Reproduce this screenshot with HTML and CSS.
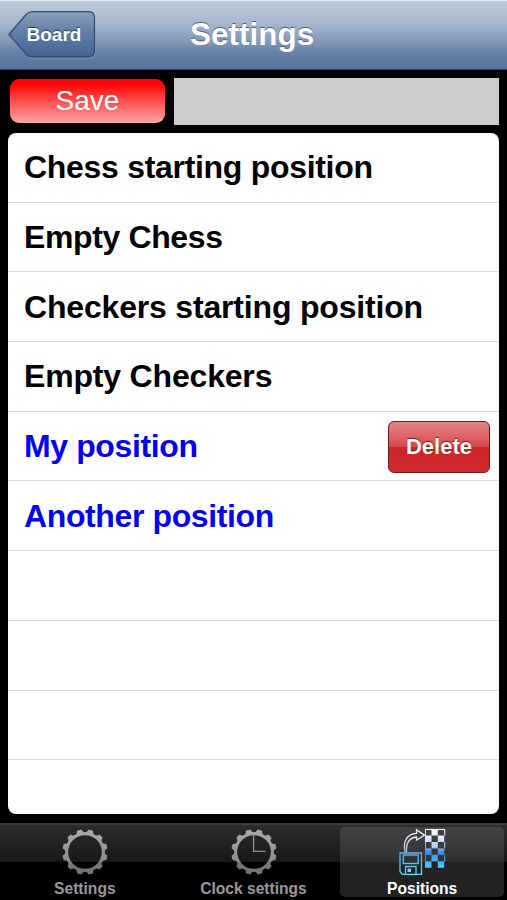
FILE: index.html
```html
<!DOCTYPE html>
<html lang="en">
<head>
    <meta charset="UTF-8">
    <meta name="viewport" content="width=device-width, initial-scale=1.0">
    <title>Settings</title>
    <link rel="stylesheet" href="styles.css">
</head>
<body>
    <header class="navbar">
        <button class="back-btn">
            <svg class="back-shape" width="90" height="50" viewBox="0 0 90 50">
                <defs>
                    <linearGradient id="back-fill" x1="0" y1="0" x2="0" y2="1">
                        <stop offset="0" stop-color="#8c9db9"/>
                        <stop offset="0.5" stop-color="#5f7ca5"/>
                        <stop offset="1" stop-color="#426393"/>
                    </linearGradient>
                </defs>
                <path d="M20 2.600 Q22 1.600 25 1.600 H80.500 Q87 1.600 87 8 V40.500 Q87 47 80.500 47 H25 Q22 47 20 45 L1.200 24.500 Z" fill="none" stroke="#a5b9d3" stroke-opacity=".6"/>
                <path d="M18.500 3 Q21 .6 24.500 .6 H80.500 Q86.500 .6 86.500 7 V39.500 Q86.500 45.900 80.500 45.900 H24.500 Q21 45.900 18.500 43.500 L.8 23.500 Z" fill="url(#back-fill)" stroke="#34496b" stroke-width="1.200"/>
            </svg>
            <span class="back-label">Board</span>
        </button>
        <h1>Settings</h1>
    </header>

    <main>
        <div class="save-row">
            <button class="save-btn">Save</button>
            <div class="name-box"></div>
        </div>
        <ul class="positions">
            <li>Chess starting position</li>
            <li class="tight">Empty Chess</li>
            <li class="wide">Checkers starting position</li>
            <li class="wide">Empty Checkers</li>
            <li class="mine tight"><span>My position</span><button class="delete-btn">Delete</button></li>
            <li class="mine tight">Another position</li>
            <li></li>
            <li></li>
            <li></li>
            <li></li>
        </ul>
    </main>

    <nav class="tabbar">
        <a class="tab">
            <svg width="48" height="48" viewBox="-24 -24 48 48">
                <defs>
                    <linearGradient id="metal" x1="0" y1="0" x2="0" y2="1">
                        <stop offset="0" stop-color="#aaa"/>
                        <stop offset="0.68" stop-color="#8c8c8c"/>
                        <stop offset="0.72" stop-color="#777"/>
                        <stop offset="1" stop-color="#727272"/>
                    </linearGradient>
                    <path id="tooth" d="M-5.200 -18.500 Q-3 -19.800 -2.700 -21.500 Q-2.500 -22.700 -1.700 -22.700 H1.700 Q2.500 -22.700 2.700 -21.500 Q3 -19.800 5.200 -18.500 Z"/>
                    <mask id="gear" maskUnits="userSpaceOnUse" x="-24" y="-24" width="48" height="48">
                        <g fill="#fff">
                            <circle r="18.300" fill="none" stroke="#fff" stroke-width="3"/>
                            <use href="#tooth" transform="rotate(15)"/>
                            <use href="#tooth" transform="rotate(45)"/>
                            <use href="#tooth" transform="rotate(75)"/>
                            <use href="#tooth" transform="rotate(105)"/>
                            <use href="#tooth" transform="rotate(135)"/>
                            <use href="#tooth" transform="rotate(165)"/>
                            <use href="#tooth" transform="rotate(195)"/>
                            <use href="#tooth" transform="rotate(225)"/>
                            <use href="#tooth" transform="rotate(255)"/>
                            <use href="#tooth" transform="rotate(285)"/>
                            <use href="#tooth" transform="rotate(315)"/>
                            <use href="#tooth" transform="rotate(345)"/>
                        </g>
                    </mask>
                </defs>
                <rect x="-24" y="-24" width="48" height="48" fill="url(#metal)" mask="url(#gear)"/>
            </svg>
            <span>Settings</span>
        </a>
        <a class="tab">
            <svg width="48" height="48" viewBox="-24 -24 48 48">
                <rect x="-24" y="-24" width="48" height="48" fill="url(#metal)" mask="url(#gear)"/>
                <path d="M-.4 -17.500 V-.6 H11.500" fill="none" stroke="#929292" stroke-width="1.300"/>
            </svg>
            <span>Clock settings</span>
        </a>
        <a class="tab active">
            <svg width="48" height="48" viewBox="-1 0 48 48">
                <defs>
                    <linearGradient id="board-fill" gradientUnits="userSpaceOnUse" x1="0" y1="1" x2="0" y2="40">
                        <stop offset="0" stop-color="#fff"/>
                        <stop offset="0.45" stop-color="#bccff5"/>
                        <stop offset="0.58" stop-color="#388cf0"/>
                        <stop offset="1" stop-color="#50c8ff"/>
                    </linearGradient>
                    <linearGradient id="disk-line" gradientUnits="userSpaceOnUse" x1="0" y1="2" x2="0" y2="46">
                        <stop offset="0" stop-color="#fff"/>
                        <stop offset="0.4" stop-color="#bcd0f0"/>
                        <stop offset="0.55" stop-color="#5fa8e0"/>
                        <stop offset="1" stop-color="#5ed8ff"/>
                    </linearGradient>
                </defs>
                <g fill="none" stroke="url(#disk-line)" stroke-width="1.300">
                    <path d="M1 25 H22.500 V46.300 H3.500 L1 43.800 Z"/>
                    <path d="M4.300 27 V35.500 H19.200 V27 Z"/>
                    <path d="M6.500 46 V38.500 H17 V46"/>
                    <path d="M6.200 24.500 C3.500 13 8 6 17.500 5.300 V1.800 L25.500 7.300 L17.500 12 V9 C10 9.500 7 15 7.500 24.500"/>
                </g>
                <path d="M8.500 40.500 H12 V44 H8.500 Z" fill="#5ed8ff"/>
                <path d="M26 1 H32.500 V2 H26 Z M32.500 1 H38.800 V7.500 H32.500 Z M38.800 1 H46.200 V7.500 H45.200 V2 H38.800 Z
                         M26 7.500 H32.500 V13.900 H26 Z M38.800 7.500 H45.200 V13.900 H38.800 Z
                         M32.500 13.900 H38.800 V20.400 H32.500 Z M45.200 13.900 H46.200 V20.400 H45.200 Z
                         M26 20.400 H32.500 V26.800 H26 Z M38.800 20.400 H45.200 V26.800 H38.800 Z
                         M32.500 26.800 H38.800 V33.200 H32.500 Z M45.200 26.800 H46.200 V33.200 H45.200 Z
                         M26 33.200 H32.500 V39.700 H26 Z M38.800 33.200 H45.200 V39.700 H38.800 Z
                         M26 2 H26.800 V7.500 H26 Z M26 13.900 H26.800 V20.400 H26 Z M26 26.800 H26.800 V33.200 H26 Z" fill="url(#board-fill)"/>
            </svg>
            <span>Positions</span>
        </a>
    </nav>
</body>
</html>
```
FILE: styles.css
```css
*{
    margin: 0;
    padding: 0;
    box-sizing: border-box;
}
body{
    height: 900px;
    display: flex;
    flex-direction: column;
    overflow: hidden;
    background-color: #000;
    font-family: "Liberation Sans", Arial, sans-serif;
}
button{
    border: none;
    font-family: inherit;
    cursor: pointer;
}
.navbar{
    height: 70px;
    display: flex;
    align-items: flex-start;
    padding: 10px 0 0 8px;
    border-top: 1px solid #e0eaf5;
    border-bottom: 1px solid #2c4470;
    background: linear-gradient(#bccada, #a9b9d0 30%, #8095b4 62%, #6682a8 75%, #587399);
}
.back-btn{
    position: relative;
    width: 88px;
    height: 47px;
    background: none;
}
.back-shape{
    position: absolute;
    left: 0;
    top: 0;
}
.back-label{
    position: relative;
    display: block;
    padding-left: 4px;
    color: #fff;
    font-size: 19px;
    font-weight: bold;
    line-height: 45px;
    text-shadow: 0 -1px 1px #2c4060;
}
h1{
    margin-left: 94px;
    color: #fff;
    font-size: 31.500px;
    line-height: 47px;
    text-shadow: 0 -1.500px 0 #4d5d75;
}
main{
    height: 753px;
    padding: 8px 8px 0;
}
.save-row{
    display: flex;
    gap: 9px;
    height: 47px;
}
.save-btn{
    width: 155px;
    height: 44px;
    margin: 1px 0 0 2px;
    border-radius: 9px;
    background: linear-gradient(#ff0505 12%, #ff4b4b 48%, #ffa4a4);
    color: #fff;
    font-size: 28px;
}
.name-box{
    flex: 1;
    background-color: #ccc;
}
.positions{
    height: 681px;
    margin-top: 8px;
    overflow: hidden;
    border-radius: 8px;
    background-color: #fff;
    list-style: none;
}
.positions li{
    height: 69.700px;
    display: flex;
    justify-content: space-between;
    align-items: center;
    padding: 1px 9px 0 16px;
    border-bottom: 1px solid #dcdcdc;
    font-size: 32px;
    font-weight: bold;
    letter-spacing: -0.300px;
}
.positions li:last-child{
    border-bottom: none;
}
.positions .tight{
    letter-spacing: -0.380px;
}
.positions .wide{
    letter-spacing: -0.180px;
}
.positions .mine{
    color: #0202ee;
}
.delete-btn{
    width: 102px;
    height: 52px;
    padding-top: 1px;
    border: 1px solid #6b1a1c;
    border-radius: 6px;
    background: linear-gradient(#e4868a, #d8484c 50%, #cb2529 50%, #cf2a2e);
    color: #fff;
    font-size: 22px;
    font-weight: bold;
    text-shadow: 0 -1px 1px #6b1a1c;
}
.tabbar{
    height: 77px;
    display: flex;
    gap: 5px;
    padding: 2px 3px 3px;
    border-top: 2px solid #3d3d3d;
    background: linear-gradient(#2c2c2c, #181818 37px, #000 37px);
}
.tab{
    width: 164px;
    height: 70px;
    display: flex;
    flex-direction: column;
    align-items: center;
    border-radius: 5px;
    color: #999;
    font-size: 15.600px;
    font-weight: bold;
}
.tab svg{
    flex: none;
    margin-top: 1px;
}
.tab span{
    line-height: 18px;
    margin-top: 4px;
}
.active{
    background: linear-gradient(#434343, #303030 35px, #222 35px, #222);
    color: #fff;
}
```
